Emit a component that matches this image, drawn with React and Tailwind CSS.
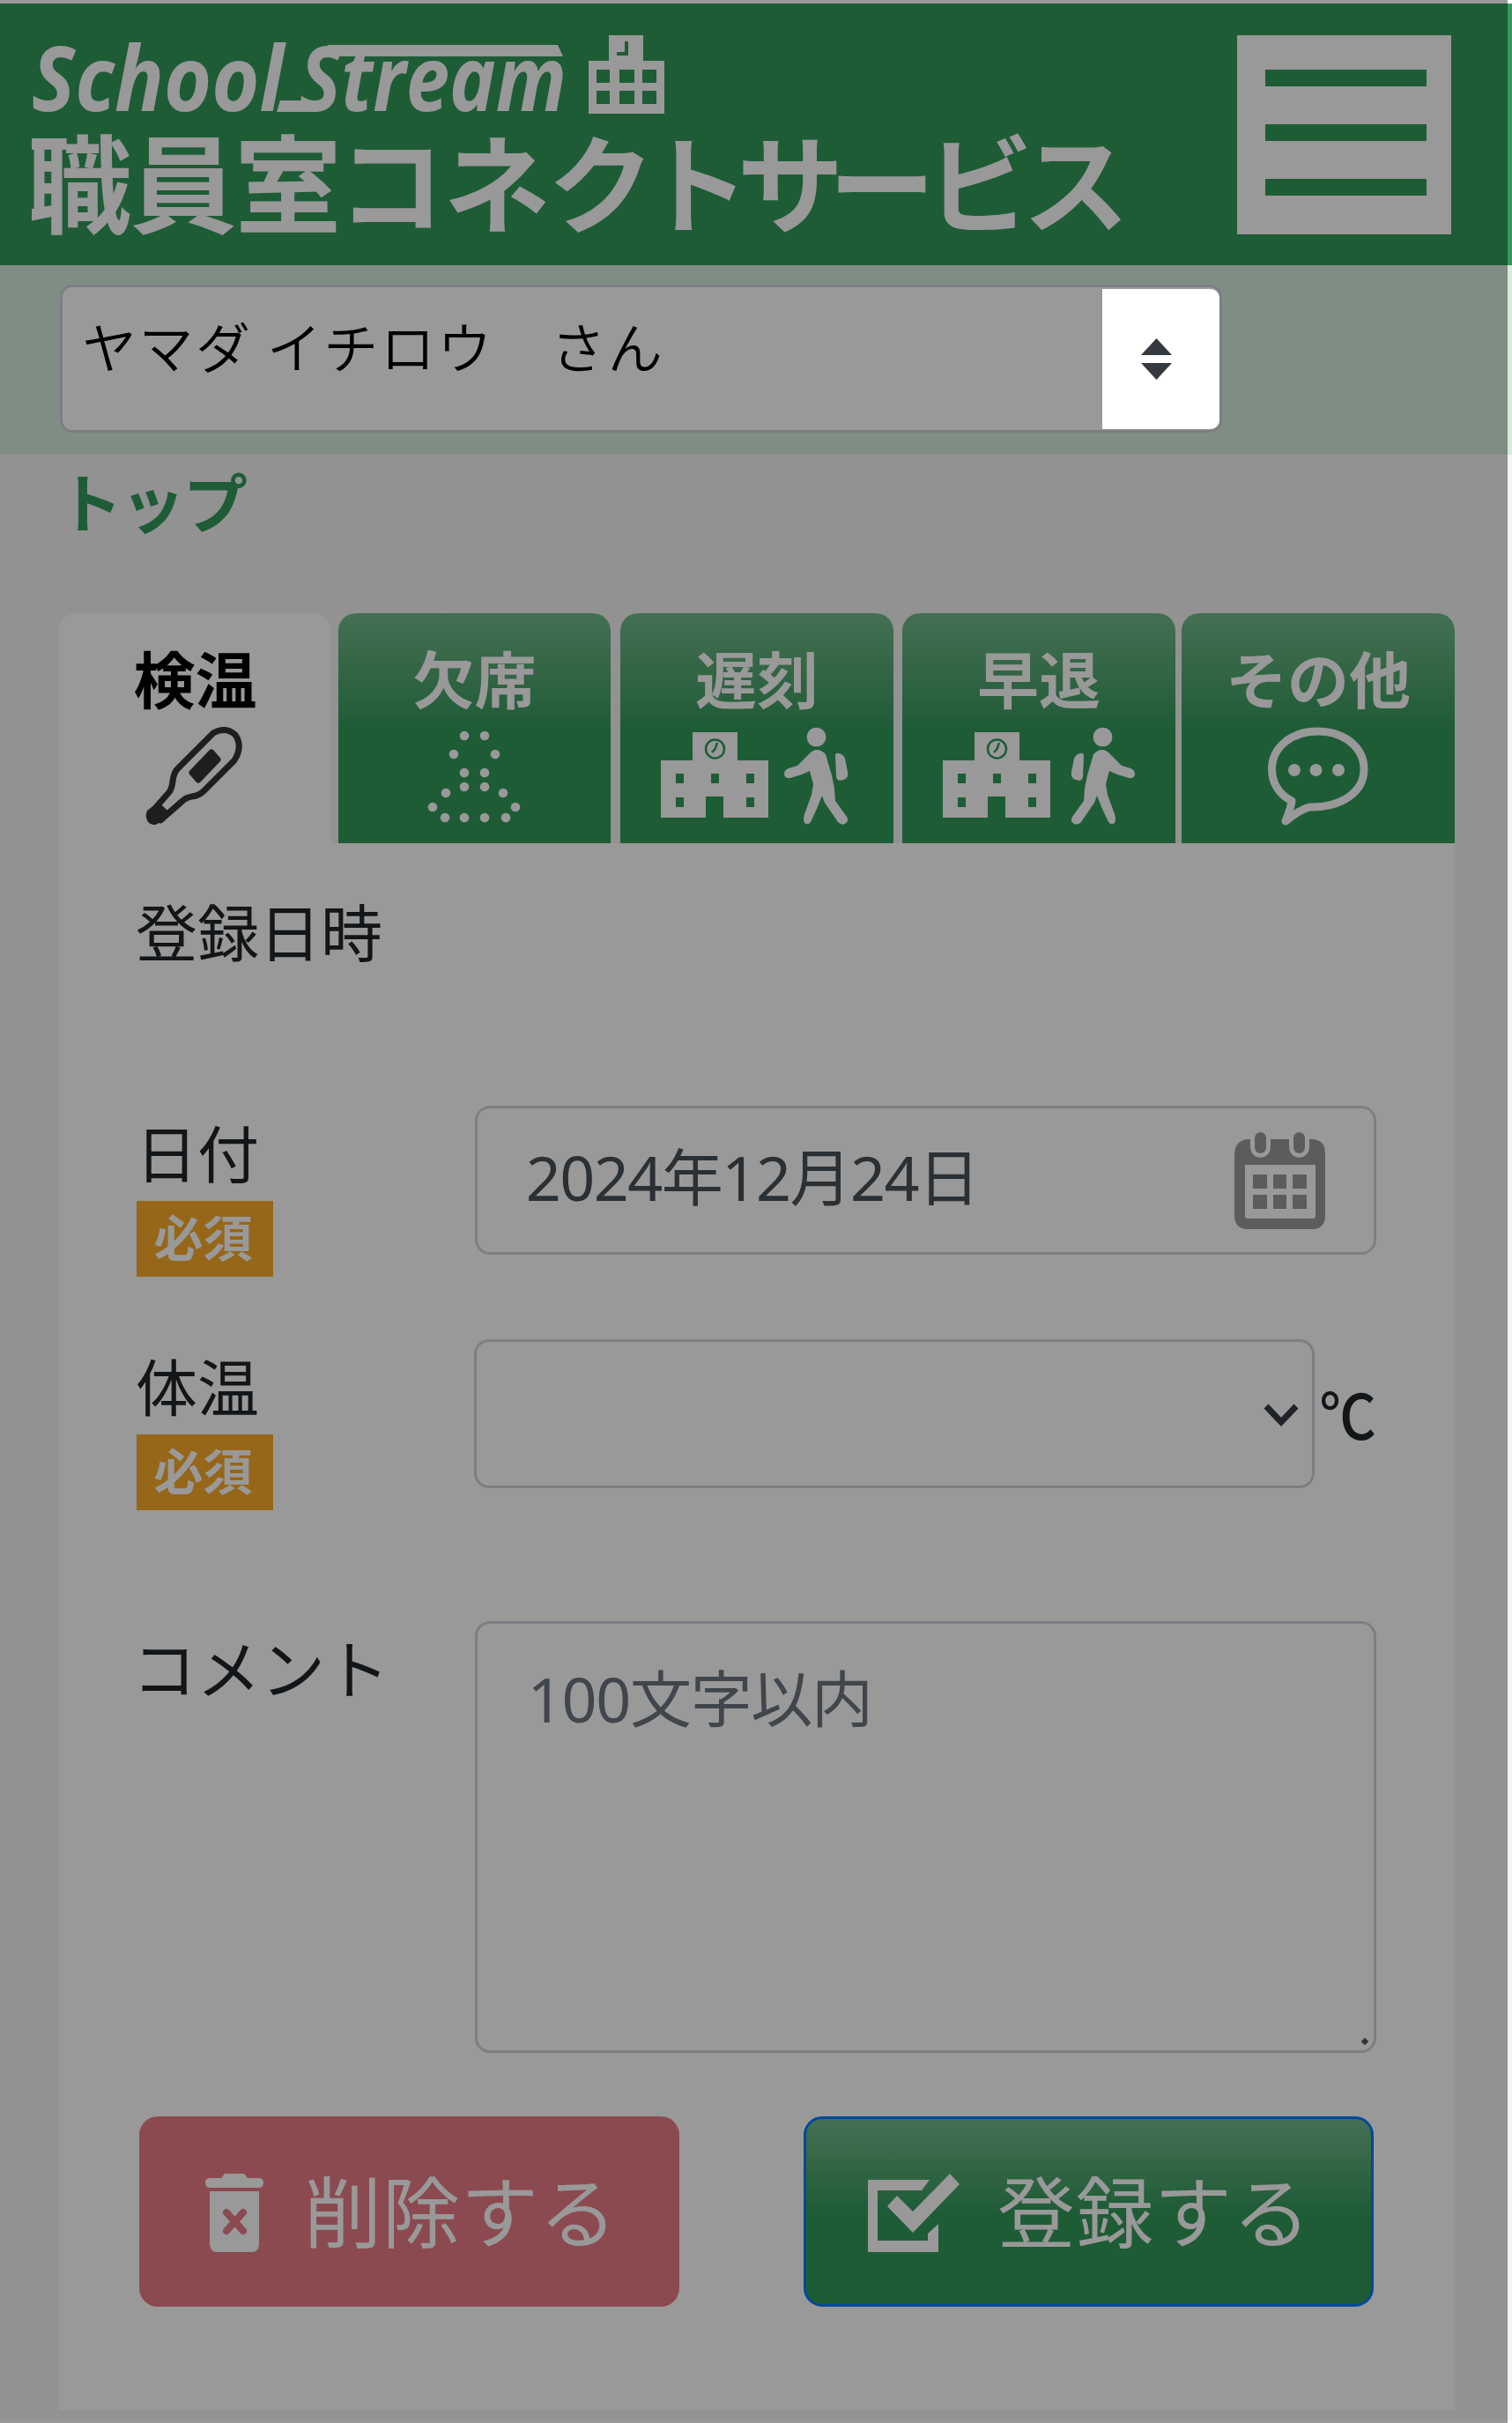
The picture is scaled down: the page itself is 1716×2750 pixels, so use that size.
import React from "react";

const tabs = [
  { label: "欠席", icon: "absent", box: "ml-[8px] w-[309px]" },
  { label: "遅刻", icon: "late", box: "ml-[11px] w-[310px]" },
  { label: "早退", icon: "early", box: "ml-[10px] w-[310px]" },
  { label: "その他", icon: "other", box: "ml-[7px] w-[310px]" },
];

const Logo = () => (
  <svg className="h-[290px] w-[1244px] text-white" viewBox="36 4 1244 290" fill="currentColor">
    <g fontFamily="Open Sans, sans-serif" fontStyle="italic" fontWeight="700" fontSize="102">
      <text x="36" y="126" textLength="286" lengthAdjust="spacingAndGlyphs">School</text>
      <text x="340" y="126" textLength="303" lengthAdjust="spacingAndGlyphs">Stream</text>
    </g>
    {/* bars that stretch the second S */}
    <path d="M372 51H633L639 64H368Z" />
    <path d="M318 114H360V127H314Z" />

    {/* school building */}
    <path
      fillRule="evenodd"
      d="M691 40H730V69H754V129H668V69H691ZM677 79V94H692V79ZM703 79V94H720V79ZM729 79V94H745V79ZM677 103V118H692V103ZM703 103V118H720V103ZM729 103V118H745V103Z"
    />
    <path d="M711 47V61H700" fill="none" stroke="#33995b" strokeWidth="4" />

    <text
      x="89 208 327 444 564 682 790 897 1001 1112 1221"
      y="255"
      textAnchor="middle"
      fontFamily="Noto Sans CJK JP, sans-serif"
      fontWeight="700"
      fontSize="121"
    >
      職員室コネクトサービス
    </text>
  </svg>
);

const Thermometer = () => (
  <svg className="mr-[4px] h-[112px] w-[110px]" viewBox="0 0 110 112" fill="none" stroke="#333" strokeWidth="7">
    <path d="M77 7Q91 -1 102 9Q111 22 101 38L66 73Q61 78 53 79Q46 80 41 85L17 106L6 98L27 74Q30 70 31 62Q32 51 38 46Z" strokeLinejoin="round" />
    <path d="M15 85L27 97L14 110Q8 113 3 108Q-1 102 2 95Z" fill="#333" stroke="none" />
    <path d="M75 29L82 37L60 60L53 52Z" fill="#333" strokeLinejoin="round" />
  </svg>
);

const absentDots = [
  [43, 10], [66, 10], [31, 31], [78, 31], [43, 52], [66, 52], [43, 68], [66, 68],
  [22, 75], [87, 75], [7, 91], [101, 91], [21, 103], [43, 103], [66, 103], [90, 103],
];

const Absent = () => (
  <svg className="h-[112px] w-[110px]" viewBox="0 0 110 112" fill="#fff">
    {absentDots.map(([x, y]) => (
      <circle key={`${x}-${y}`} cx={x} cy={y} r="5.3" />
    ))}
  </svg>
);

const School = () => (
  <svg className="mt-[5px] h-[99px] w-[122px]" viewBox="0 0 122 99">
    <path
      fill="#fff"
      fillRule="evenodd"
      d="M36 1H87V33H122V98H71V74H51V98H0V33H36ZM17 48V59H26V48ZM57 48V59H66V48ZM97 48V59H106V48ZM17 75V86H26V75ZM97 75V86H106V75Z"
    />
    <circle cx="61.5" cy="20" r="10.5" fill="none" stroke="#33995b" strokeWidth="2.5" />
    <path d="M64 13L61.5 20L58 24" fill="none" stroke="#33995b" strokeWidth="2.5" />
  </svg>
);

const Walker = ({ className }) => (
  <svg className={`h-[112px] w-[73px] ${className}`} viewBox="0 0 73 112" fill="#fff">
    <circle cx="36.5" cy="11.5" r="10.8" />
    <path d="M28 31Q37 21 47 31L54 55L57 70L58 84L71 102Q74 107 69 110Q65 112 61 108L46 86L43 78L37 93L30 108Q27 112 23 109Q21 106 23 99L31 77L33 65L29 50L20 54L7 58Q0 59 0 53Q0 49 5 47L15 44Z" />
    <path d="M58 33Q58 29 62 30Q67 31 69 36L72 51Q73 59 67 60L63 61Q59 60 59 56Z" />
  </svg>
);

const Balloon = () => (
  <svg className="h-[112px] w-[114px]" viewBox="0 0 114 112" fill="none" stroke="#fff" strokeWidth="9">
    <path
      strokeLinejoin="round"
      d="M56.5 5C27 5 4.5 23 4.5 48C4.5 64 13 77 27 84Q26 92 20 107Q36 94 47 91C83 92 109 74 109 48C109 23 86 5 56.5 5Z"
    />
    <g fill="#fff" stroke="none">
      <circle cx="30" cy="49" r="7" />
      <circle cx="54.5" cy="49" r="7" />
      <circle cx="80" cy="49" r="7" />
    </g>
  </svg>
);

const Calendar = () => (
  <svg className="h-[111px] w-[104px]" viewBox="0 0 104 111">
    <path
      fill="#999"
      fillRule="evenodd"
      d="M14 9H18V17C18 34 41 34 41 17V9H62V17C62 34 85 34 85 17V9H89Q103 10 103 25V97Q102 110 90 111H13Q1 110 0 97V25Q1 11 14 9ZM12 38V96Q12 99 15 99H89Q92 99 92 96V38Z"
    />
    <g fill="#999">
      <rect x="23" y="1" width="13" height="24" rx="6.5" />
      <rect x="67" y="1" width="13" height="24" rx="6.5" />
      <path d="M21 49h16v16h-16zM44 49h15v16h-15zM66 49h16v16h-16zM21 72h16v16h-16zM44 72h15v16h-15zM66 72h16v16h-16z" />
    </g>
  </svg>
);

const Trash = () => (
  <svg className="mt-[2px] h-[89px] w-[66px]" viewBox="0 0 66 89" fill="#fff">
    <path d="M22 0H44L48 5H62Q66 6 66 10Q66 15 62 16H4Q0 15 0 10Q0 6 4 5H18Z" />
    <path d="M5 20H61V81Q60 88 54 89H12Q6 88 5 81Z" />
    <path d="M24 44L43 65M43 44L24 65" stroke="#e87c86" strokeWidth="8" strokeLinecap="round" />
  </svg>
);

const CheckBox = () => (
  <svg className="mt-[2px] h-[89px] w-[104px]" viewBox="0 0 104 89" fill="#fff">
    <path d="M0 7H70L61 19H11V76H68V68L80 57V89H0Z" />
    <path d="M33 25L51 43L93 0L104 12L51 67L22 37Z" />
  </svg>
);

const Required = () => (
  <span className="mt-[4px] ml-px flex h-[86px] w-[155px] items-center justify-center bg-[#faaa2a] pr-[4px] pb-[8px] text-[56px] leading-none font-bold text-white">
    必須
  </span>
);

const TabIcon = ({ name }) => {
  if (name === "absent") return <Absent />;
  if (name === "other") return <Balloon />;
  return (
    <div className={name === "late" ? "mr-[5px] flex gap-[18px]" : "flex gap-[23px]"}>
      <School />
      <Walker className={name === "early" ? "-scale-x-100" : ""} />
    </div>
  );
};

export default function App() {
  return (
    <div className="relative flex h-[2750px] w-[1716px] flex-col overflow-hidden bg-[#f4f4f4] font-['Noto_Sans_CJK_JP',sans-serif] text-[70px] leading-[104px] text-[#212529]">
      <div className="h-[4px] shrink-0 bg-white" />
      <header className="flex h-[297px] shrink-0 justify-between bg-[#33995b] pr-[69px] pl-[36px]">
        <Logo />
        <button className="mt-[36px] flex h-[226px] w-[243px] flex-col gap-[43px] bg-white pt-[39px] pl-[32px]">
          <span className="h-[19px] w-[183px] bg-[#33995b]" />
          <span className="h-[19px] w-[183px] bg-[#33995b]" />
          <span className="h-[19px] w-[183px] bg-[#33995b]" />
        </button>
      </header>

      <div className="h-[215px] shrink-0 bg-[#d5ebdc] pt-[22px] pl-[68px]">
        <div className="flex h-[168px] w-[1319px] justify-between rounded-[14px] border-3 border-[#ced4da] bg-white">
          <span className="pt-[14px] pl-[22px] text-[62px] font-[350] tracking-[2.5px] whitespace-pre text-black">
            ヤマダ イチロウ　さん
          </span>
          {/* stays above the dimmed layer */}
          <div className="z-20 mt-[2px] mb-px flex w-[133px] items-center rounded-r-[10px] bg-white pl-[44px]">
            <svg className="h-[47px] w-[35px]" viewBox="0 0 35 47" fill="#343a40">
              <path d="M17.5 0L35 19H0ZM0 28H35L17.5 47Z" />
            </svg>
          </div>
        </div>
      </div>

      <div className="-mt-px h-[181px] shrink-0 pl-[66px] text-[73px] font-bold tracking-[-2px] text-[#33995b]">トップ</div>

      <nav className="flex h-[261px] shrink-0 pl-[67px] font-bold text-white">
        <div className="flex w-[309px] flex-col items-center gap-[4px] rounded-t-[20px] bg-white pt-[21px] text-black">
          <span>検温</span>
          <Thermometer />
        </div>
        {tabs.map((tab) => (
          <div
            key={tab.label}
            className={`flex flex-col items-center gap-[4px] rounded-t-[20px] bg-linear-to-b from-[#72ba8b] to-[#33995b] to-50% pt-[21px] ${tab.box}`}
          >
            <span>{tab.label}</span>
            <TabIcon name={tab.icon} />
          </div>
        ))}
      </nav>

      <main className="ml-[67px] flex h-[1778px] w-[1584px] shrink-0 flex-col bg-white pr-[89px] pl-[87px]">
        <div className="mt-[47px] h-[251px]">登録日時</div>

        <div className="flex h-[265px]">
          <div className="w-[385px]">
            <div>日付</div>
            <Required />
          </div>
          <div className="flex h-[169px] w-[1024px] items-center justify-between rounded-[17px] border-3 border-[#ced4da] pr-[54px] pl-[55px] text-[#495057]">
            <span className="pb-[7px] font-['Noto_Sans','Noto_Sans_CJK_JP',sans-serif] tracking-[-1.5px]">2024年12月24日</span>
            <Calendar />
          </div>
        </div>

        <div className="flex h-[320px]">
          <div className="w-[385px]">
            <div>体温</div>
            <Required />
          </div>
          <div className="flex h-[169px] w-[955px] items-center justify-end rounded-[17px] border-3 border-[#ced4da] pr-[15px]">
            <svg className="mt-[4px] h-[28px] w-[40px]" viewBox="0 0 40 28" fill="none" stroke="#343a40" strokeWidth="7">
              <path d="M3 3L20 21L37 3" />
            </svg>
          </div>
          <span className="origin-right scale-x-92 pt-[32px] font-medium">℃</span>
        </div>

        <div className="flex h-[562px]">
          <div className="w-[385px]">
            <div className="-mt-[2px] -ml-[4px] text-[73px]">コメント</div>
          </div>
          <div className="flex h-[490px] w-[1024px] justify-between rounded-[17px] border-3 border-[#ced4da] pt-[33px] pr-[7px] pl-[57px] text-[#6c757d]">
            <span className="font-['Noto_Sans','Noto_Sans_CJK_JP',sans-serif] tracking-[-1.3px]">100文字以内</span>
            <span className="mb-[7px] size-[6px] self-end rotate-45 bg-[#555]" />
          </div>
        </div>

        <div className="flex justify-between pr-[3px] pl-[4px] text-[88px] tracking-[1px] text-white">
          <button className="flex h-[216px] w-[613px] items-center rounded-[21px] bg-[#e87c86] pl-[75px]">
            <Trash />
            <span className="mb-[8px] ml-[46px]">削除する</span>
          </button>
          <button className="flex h-[216px] w-[647px] items-center rounded-[21px] border-3 border-[#007bff] bg-linear-to-b from-[#72ba8b] to-[#33995b] to-50% pl-[70px]">
            <CheckBox />
            <span className="mb-[8px] ml-[43px]">登録する</span>
          </button>
        </div>
      </main>

      {/* page bottom edge */}
      <div className="mt-auto h-[4px] shrink-0 bg-white" />

      {/* dimmed layer */}
      <div className="absolute inset-y-0 left-0 z-10 w-[1711px] bg-black/40" />
    </div>
  );
}
